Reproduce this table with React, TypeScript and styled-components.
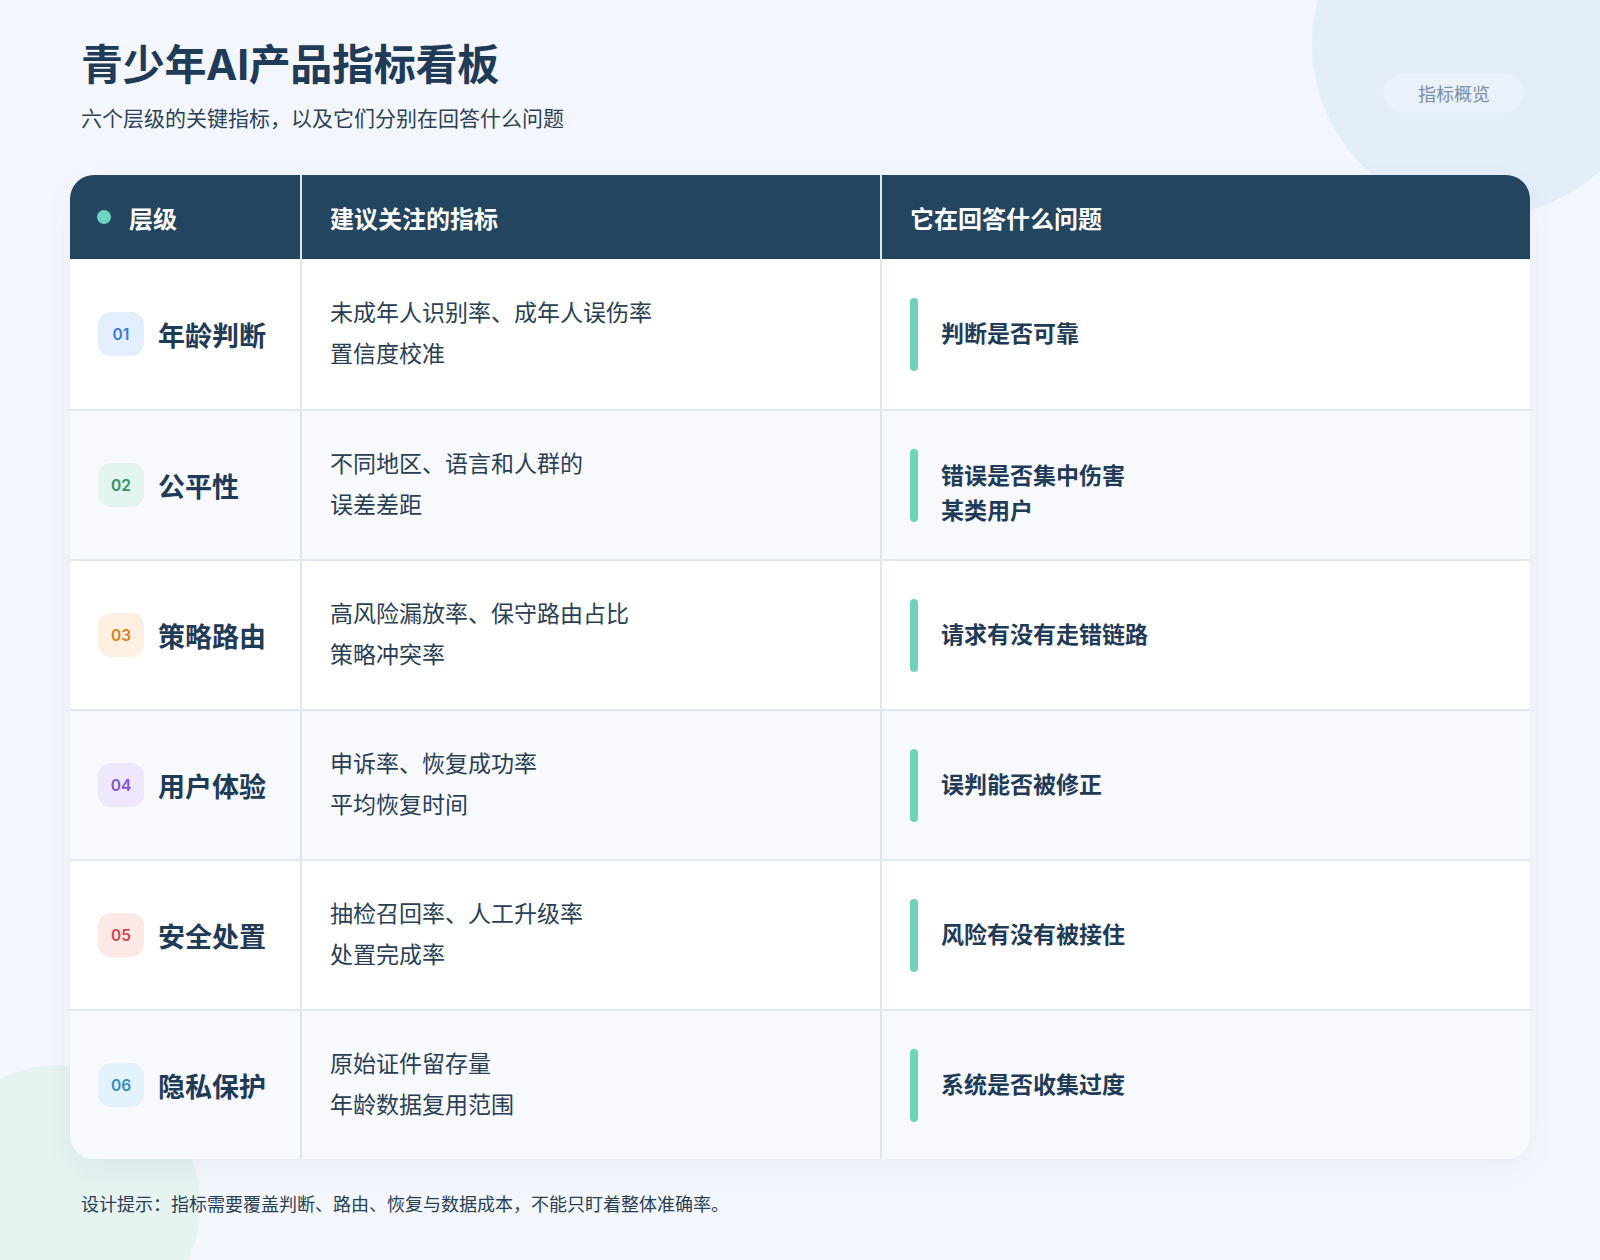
import React from "react";
import styled, { createGlobalStyle } from "styled-components";

const GlobalStyle = createGlobalStyle`
  * { box-sizing: border-box; }
  html, body { margin: 0; padding: 0; background: #f3f7fd; }
  body {
    font-family: "Inter", "Noto Sans CJK SC", "Noto Sans", sans-serif;
    color: #1f3b57;
  }
`;

const Page = styled.div`
  position: relative;
  width: 1600px;
  min-height: 1260px;
  overflow: hidden;
  background: #f3f7fd;
  padding: 38px 70px 0;
`;

const Blob = styled.div<{ $color: string; $size: number; $x: number; $y: number }>`
  position: absolute;
  width: ${(p) => p.$size}px;
  height: ${(p) => p.$size}px;
  left: ${(p) => p.$x - p.$size / 2}px;
  top: ${(p) => p.$y - p.$size / 2}px;
  border-radius: 50%;
  background: ${(p) => p.$color};
  z-index: 0;
`;

const Content = styled.div`
  position: relative;
  z-index: 1;
`;

const Header = styled.header`
  display: flex;
  justify-content: space-between;
  align-items: flex-start;
  padding: 0 5px 0 11px;
`;

const TitleBlock = styled.div`
  display: flex;
  flex-direction: column;
`;

const Title = styled.h1`
  margin: 0;
  font-size: 42px;
  line-height: 54px;
  font-weight: 700;
  color: #1f3b57;
  letter-spacing: -0.3px;
`;

const Subtitle = styled.p`
  margin: 13px 0 0;
  font-size: 21px;
  line-height: 28px;
  color: #2c4157;
`;

const Pill = styled.div`
  margin-top: 35px;
  height: 40px;
  padding: 0 34px;
  border-radius: 20px;
  background: #e9f1fa;
  border: 1px solid #e6eef8;
  color: #7a8ea6;
  font-size: 18px;
  display: flex;
  align-items: center;
`;

const Card = styled.section`
  margin-top: 42px;
  border-radius: 24px;
  overflow: hidden;
  background: #ffffff;
  box-shadow: 0 10px 30px rgba(35, 69, 95, 0.05);
`;

const Grid = styled.div`
  display: grid;
  grid-template-columns: 230px 580px 1fr;
`;

const HeadCell = styled.div<{ $first?: boolean }>`
  height: 84px;
  background: #23455f;
  color: #ffffff;
  font-size: 24px;
  font-weight: 700;
  display: flex;
  align-items: center;
  gap: 18px;
  padding-left: ${(p) => (p.$first ? "27px" : "28px")};
  border-left: ${(p) => (p.$first ? "none" : "2px solid #dfe7f0")};
`;

const Dot = styled.span`
  width: 14px;
  height: 14px;
  border-radius: 50%;
  background: #6dd5bf;
`;

const Cell = styled.div<{ $alt: boolean; $first?: boolean; $top: boolean }>`
  height: 150px;
  background: ${(p) => (p.$alt ? "#f7f9fd" : "#ffffff")};
  border-top: ${(p) => (p.$top ? "2px solid #e2e8f1" : "none")};
  border-left: ${(p) => (p.$first ? "none" : "2px solid #dde5ee")};
  padding-left: 28px;
  display: flex;
  align-items: center;
`;

const Badge = styled.span<{ $bg: string; $fg: string }>`
  width: 46px;
  height: 44px;
  border-radius: 13px;
  background: ${(p) => p.$bg};
  color: ${(p) => p.$fg};
  font-family: "Inter", sans-serif;
  font-size: 15.5px;
  font-weight: 600;
  display: flex;
  align-items: center;
  justify-content: center;
  flex-shrink: 0;
`;

const Label = styled.span`
  margin-left: 14px;
  font-size: 27px;
  font-weight: 700;
  color: #1f3b57;
`;

const Metrics = styled.div`
  font-size: 23px;
  line-height: 41px;
  color: #2a3f55;
`;

const Bar = styled.span`
  width: 8px;
  height: 73px;
  border-radius: 4px;
  background: #6fd3bb;
  flex-shrink: 0;
`;

const Answer = styled.div<{ $multi: boolean }>`
  margin-left: 23px;
  padding-top: ${(p) => (p.$multi ? "18px" : "0")};
  font-size: 23px;
  line-height: 35px;
  font-weight: 700;
  color: #1f3b57;
`;

const Footer = styled.p`
  margin: 35px 0 0;
  padding-left: 11px;
  font-size: 18px;
  line-height: 22px;
  color: #2a3f55;
`;

type Row = {
  no: string;
  name: string;
  bg: string;
  fg: string;
  metrics: string[];
  answer: string[];
};

const rows: Row[] = [
  { no: "01", name: "年龄判断", bg: "#e3effd", fg: "#3a7bd5", metrics: ["未成年人识别率、成年人误伤率", "置信度校准"], answer: ["判断是否可靠"] },
  { no: "02", name: "公平性", bg: "#e2f5ee", fg: "#2d9468", metrics: ["不同地区、语言和人群的", "误差差距"], answer: ["错误是否集中伤害", "某类用户"] },
  { no: "03", name: "策略路由", bg: "#fdf0e0", fg: "#dc7f1c", metrics: ["高风险漏放率、保守路由占比", "策略冲突率"], answer: ["请求有没有走错链路"] },
  { no: "04", name: "用户体验", bg: "#efe8fd", fg: "#7d55d3", metrics: ["申诉率、恢复成功率", "平均恢复时间"], answer: ["误判能否被修正"] },
  { no: "05", name: "安全处置", bg: "#fde8e8", fg: "#d0474d", metrics: ["抽检召回率、人工升级率", "处置完成率"], answer: ["风险有没有被接住"] },
  { no: "06", name: "隐私保护", bg: "#e2f3fb", fg: "#2e8ec4", metrics: ["原始证件留存量", "年龄数据复用范围"], answer: ["系统是否收集过度"] },
];

export default function App() {
  return (
    <>
      <GlobalStyle />
      <Page>
        <Blob $color="#e4eef9" $size={344} $x={1484} $y={44} />
        <Blob $color="#e5f3f1" $size={280} $x={60} $y={1205} />
        <Content>
          <Header>
            <TitleBlock>
              <Title>青少年AI产品指标看板</Title>
              <Subtitle>六个层级的关键指标，以及它们分别在回答什么问题</Subtitle>
            </TitleBlock>
            <Pill>指标概览</Pill>
          </Header>
          <Card>
            <Grid>
              <HeadCell $first>
                <Dot />
                层级
              </HeadCell>
              <HeadCell>建议关注的指标</HeadCell>
              <HeadCell>它在回答什么问题</HeadCell>
              {rows.map((r, i) => {
                const alt = i % 2 === 1;
                const top = i > 0;
                return (
                  <React.Fragment key={r.no}>
                    <Cell $alt={alt} $top={top} $first>
                      <Badge $bg={r.bg} $fg={r.fg}>{r.no}</Badge>
                      <Label>{r.name}</Label>
                    </Cell>
                    <Cell $alt={alt} $top={top}>
                      <Metrics>
                        {r.metrics.map((m) => (
                          <div key={m}>{m}</div>
                        ))}
                      </Metrics>
                    </Cell>
                    <Cell $alt={alt} $top={top}>
                      <Bar />
                      <Answer $multi={r.answer.length > 1}>
                        {r.answer.map((a) => (
                          <div key={a}>{a}</div>
                        ))}
                      </Answer>
                    </Cell>
                  </React.Fragment>
                );
              })}
            </Grid>
          </Card>
          <Footer>设计提示：指标需要覆盖判断、路由、恢复与数据成本，不能只盯着整体准确率。</Footer>
        </Content>
      </Page>
    </>
  );
}
